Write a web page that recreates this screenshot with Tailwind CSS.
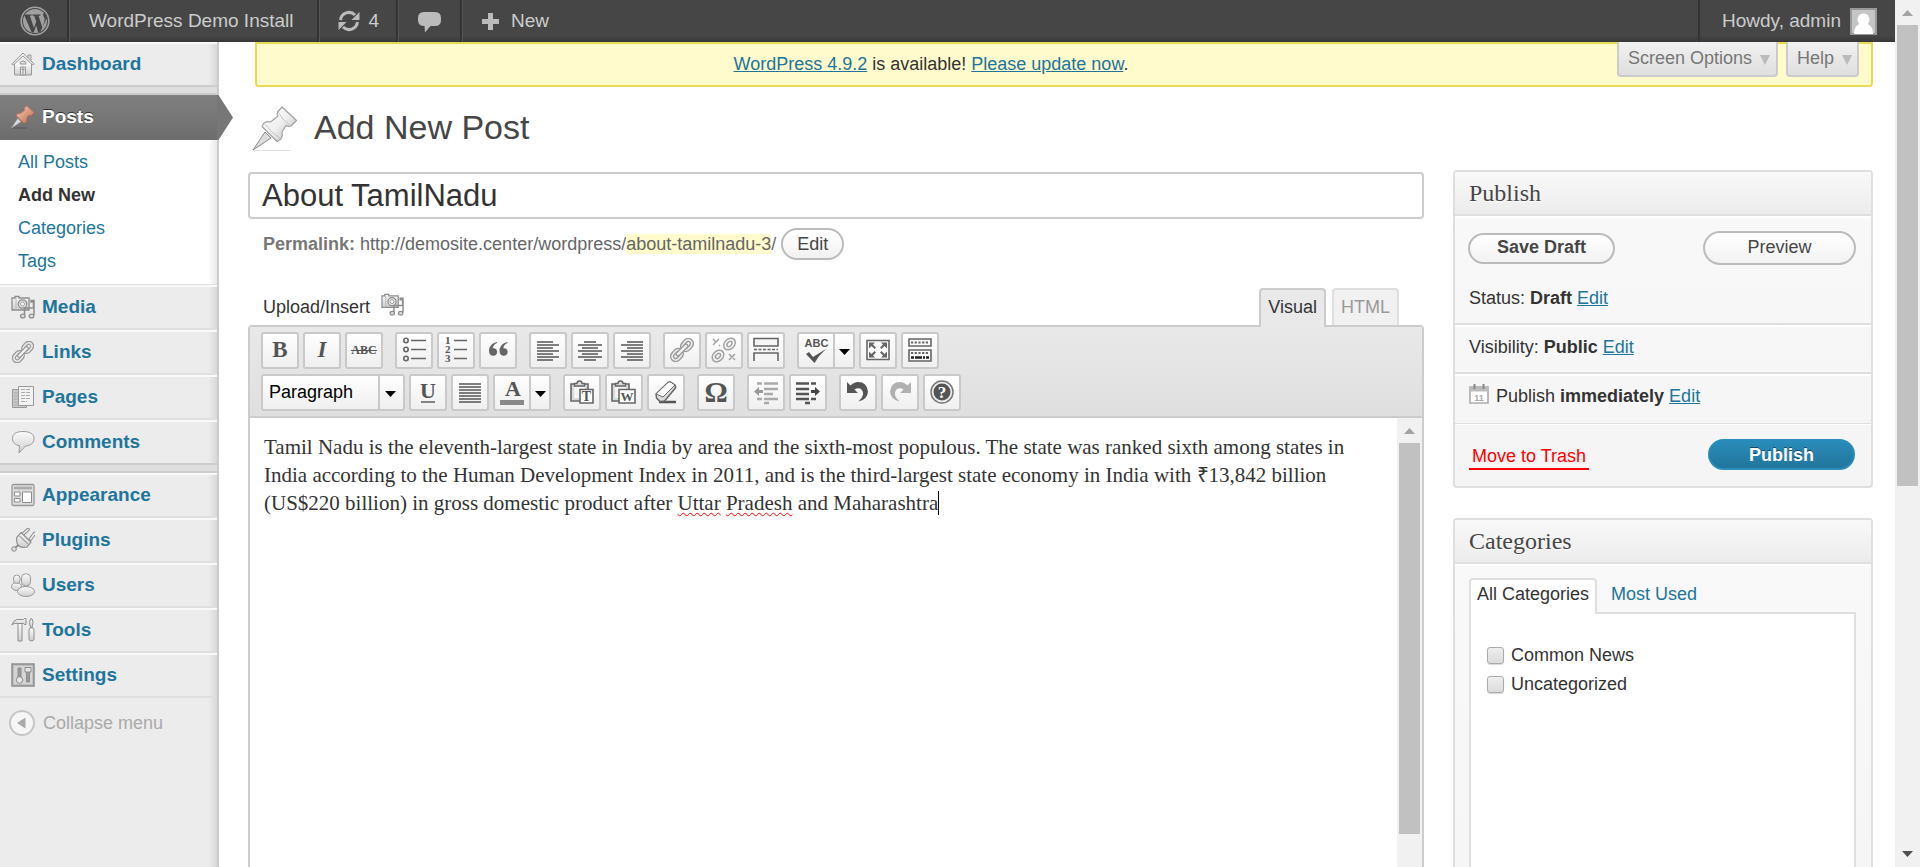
<!DOCTYPE html>
<html lang="en">
<head>
<meta charset="utf-8">
<title>Add New Post</title>
<script src="https://cdn.jsdelivr.net/npm/@tailwindcss/browser@4"></script>
</head>
<body class="flex h-screen overflow-hidden bg-white font-['Liberation_Sans',Arial,sans-serif] text-[18px] leading-6 text-[#333]">
<svg class="absolute size-0" aria-hidden="true">
  <defs>
    <linearGradient id="metal" x1="0" y1="0" x2="0" y2="1"><stop offset="0" stop-color="#fbfbfb"/><stop offset="1" stop-color="#cfcfcf"/></linearGradient>
    <linearGradient id="pinShade" x1="0" y1="0" x2="1" y2="1"><stop offset="0" stop-color="#fff"/><stop offset="0.500" stop-color="#f0f0f0"/><stop offset="1" stop-color="#b4b4b4"/></linearGradient>
    <linearGradient id="pinRed" x1="0" y1="0" x2="1" y2="1"><stop offset="0" stop-color="#f3cbb9"/><stop offset="1" stop-color="#c06a4c"/></linearGradient>
    <symbol id="chain" viewBox="0 0 24 24">
      <g fill="none" stroke-linecap="round">
        <g stroke="#999" stroke-width="4.400"><rect x="-5.500" y="-3.600" width="11" height="7.200" rx="3.600" transform="translate(17 7) rotate(-48)"/><rect x="-5.500" y="-3.600" width="11" height="7.200" rx="3.600" transform="translate(7 17) rotate(-48)"/></g>
        <g stroke="#e9e9e9" stroke-width="1.800"><rect x="-5.500" y="-3.600" width="11" height="7.200" rx="3.600" transform="translate(17 7) rotate(-48)"/><rect x="-5.500" y="-3.600" width="11" height="7.200" rx="3.600" transform="translate(7 17) rotate(-48)"/></g>
        <path d="M8 16 16 8" stroke="#999" stroke-width="5"/><path d="M8 16 16 8" stroke="#f3f3f3" stroke-width="2.400"/>
      </g>
    </symbol>
    <symbol id="media" viewBox="0 0 24 24">
      <path d="M1 3h3V1.500h4V3h10v12H1z" fill="url(#metal)" stroke="#8d8d8d" stroke-width="1.300"/>
      <path d="M5 3v12" stroke="#b5b5b5"/><circle cx="11.500" cy="9" r="4.200" fill="#e8e8e8" stroke="#8d8d8d" stroke-width="1.300"/><circle cx="11.500" cy="9" r="2" fill="#fff" stroke="#999"/>
      <path d="M13.500 20.500V13H22.500V7H20V5.500h3V20" fill="none" stroke="#8d8d8d" stroke-width="1.500"/>
      <ellipse cx="11.800" cy="21" rx="2.300" ry="1.900" fill="#ddd" stroke="#8d8d8d" stroke-width="1.300"/><ellipse cx="20.500" cy="21" rx="2.300" ry="1.900" fill="#ddd" stroke="#8d8d8d" stroke-width="1.300"/>
    </symbol>
    <symbol id="clip" viewBox="0 0 24 24">
      <path d="M1 4h17v17H1z" fill="#d9d9d9" stroke="#666" stroke-width="1.600"/><path d="M4 7h11v11H4z" fill="#f4f4f4"/>
      <path d="M4.500 6V3.500H7A2.500 2.500 0 0 1 12 3.500h2.500V6z" fill="#ddd" stroke="#666" stroke-width="1.400"/>
    </symbol>
    <symbol id="pin" viewBox="0 0 46 46">
      <path d="M1 44.500h38" stroke="#e3e3e3"/><path d="M1 44 13 26l6 6z" fill="#ddd" stroke="#888"/>
      <path d="M30 1 44.500 14.500 39 20q-3 1-5-.5L30 26q1 4-1 7l-4 2.500L10 20.500 12 17q3-2 6.500-1L26 10q-1.500-2-.5-4z" fill="url(#pinShade)" stroke="#a2a2a2" stroke-width="1.200" stroke-linejoin="round"/>
      <path d="M26 6q5 9 13 14M13 18q6 9 15 14" fill="none" stroke="#c6c6c6"/>
    </symbol>
  </defs>
</svg>

<div class="flex min-w-0 flex-1 flex-col">
  <header class="flex h-[42px] shrink-0 items-stretch bg-linear-to-b from-[#464646] from-85% to-[#383838] text-[19px] text-[#ccc]">
    <a href="#" aria-label="About WordPress" class="flex w-[69px] items-center border-r-2 border-[#333] pl-5">
      <svg class="size-[30px]" viewBox="0 0 30 30"><circle cx="15" cy="15" r="13.800" fill="none" stroke="#a0a0a0" stroke-width="1.600"/><circle cx="15" cy="15" r="12" fill="#a0a0a0"/><path d="M4 8.500h7.500v1.300H9.800L14 22l2.200-6.500-2-5.700h-1.700V8.500h8v1.300h-2l4 12 2-7c.7-3-1.200-4-1.300-5.800C23 7.500 24 6.500 25 6.500L27 12l-7 14.500-2-.5-1.800-6.500-2.500 7h-2L4.500 9.800z" fill="#464646"/></svg>
    </a>
    <a href="#" class="flex items-center border-r-2 border-l border-r-[#333] border-l-[#555] pr-[23px] pl-[19px]">WordPress Demo Install</a>
    <a href="#" class="flex items-center gap-2 border-r-2 border-l border-r-[#333] border-l-[#555] px-[17px]">
      <svg class="size-[24px]" viewBox="0 0 24 24" fill="none" stroke="#bbb" stroke-width="3"><path d="M3.500 11A8.500 8.500 0 0 1 18 6M20.500 13A8.500 8.500 0 0 1 6 18"/><path d="M22.500 3v8h-8zM1.500 21v-8h8z" fill="#bbb" stroke="none"/></svg>4</a>
    <a href="#" aria-label="Comments" class="flex items-center border-r-2 border-l border-r-[#333] border-l-[#555] px-[19px]">
      <svg class="size-[23px]" viewBox="0 0 23 23"><path d="M6 2h11q6 0 6 6v2q0 6-6 6h-4.500L7 22.500 6.500 16Q0 16 0 10V8q0-6 6-6z" fill="#bbb"/></svg></a>
    <a href="#" class="flex items-center gap-3 border-l border-[#555] px-[19px]">
      <svg class="size-[17px]" viewBox="0 0 17 17"><path d="M6 0h5v6h6v5h-6v6H6v-6H0V6h6z" fill="#bbb"/></svg>New</a>
    <a href="#" class="ml-auto flex items-center gap-[9px] border-l-2 border-[#333] pr-[18px] pl-[22px]">Howdy, admin
      <svg class="size-[27px]" viewBox="0 0 27 27"><rect x="1" y="1" width="25" height="25" fill="#c5c5c5" stroke="#999" stroke-width="2"/><circle cx="13.500" cy="11.500" r="6" fill="#fff"/><path d="M4 26q0-9 7-10.500h5Q23 17 23 26z" fill="#fff"/></svg></a>
  </header>

  <div class="flex min-h-0 flex-1 items-stretch">
    <aside class="w-[219px] shrink-0 border-r-2 border-[#ccc] bg-linear-to-l from-[#d8d8d8] to-[#ececec] to-4% text-[19px] font-bold text-[#21759b]">
      <nav aria-label="Admin menu">
        <a href="#" class="flex h-[45px] items-center gap-[7px] border-t-2 border-b-2 border-t-[#f9f9f9] border-b-[#ccc] pb-0.5 pl-[11px]">
          <svg class="size-6" viewBox="0 0 24 24"><path d="M3.500 11v12h17V11" fill="url(#metal)" stroke="#999"/><path d="M17 3h3v6h-3z" fill="#ddd" stroke="#999"/><path d="M12 1 0.800 12l1.500 1L12 4l9.700 9 1.500-1z" fill="#eee" stroke="#999"/><path d="M9.500 15h5v8h-5zM10.500 17.500h3M12 15v8M9 12a3 3 0 0 1 6 0z" fill="#e3e3e3" stroke="#999"/></svg>
          Dashboard</a>
        <div class="h-2 border-b-2 border-[#ccc] bg-[#dedede]"></div>
        <a href="#" class="relative flex h-[45px] items-center gap-[7px] bg-linear-to-b from-[#808080] to-[#6d6d6d] pb-0.5 pl-[11px] text-white text-shadow-[0_-1px_0_#333]">
          <svg class="absolute top-0 left-[217px] h-[45px] w-4" viewBox="0 0 16 45"><path d="M0 0h1.500L16 22.500 1.500 45H0z" fill="#777"/></svg>
          <svg class="size-6" viewBox="0 0 46 46"><path d="M2 44h28" stroke="#5e5e5e" stroke-width="3"/><path d="M1 44 13 26l6 6z" fill="#ddd" stroke="#aaa"/><path d="M30 1 44.500 14.500 39 20q-3 1-5-.5L30 26q1 4-1 7l-4 2.500L10 20.500 12 17q3-2 6.500-1L26 10q-1.500-2-.5-4z" fill="url(#pinRed)" stroke="#b2674d" stroke-width="1.500"/></svg>
          Posts</a>
        <ul class="border-b border-[#dfdfdf] bg-linear-to-l from-[#e9e9e9] to-white to-4% pt-[6px] pb-[6px] pl-[18px] text-[18px] leading-[33px] font-normal">
          <li><a href="#">All Posts</a></li>
          <li><a href="#" class="font-bold text-[#333]">Add New</a></li>
          <li><a href="#">Categories</a></li>
          <li><a href="#">Tags</a></li>
        </ul>
        <a href="#" class="flex h-[45px] items-center gap-[7px] border-t-2 border-b-2 border-t-[#f9f9f9] border-b-[#dfdfdf] pb-0.5 pl-[11px]">
          <svg class="size-6"><use href="#media"/></svg>Media</a>
        <a href="#" class="flex h-[45px] items-center gap-[7px] border-t-2 border-b-2 border-t-[#f9f9f9] border-b-[#dfdfdf] pb-0.5 pl-[11px]">
          <svg class="size-6" viewBox="-1 -1 26 26"><use href="#chain" width="24" height="24"/></svg>Links</a>
        <a href="#" class="flex h-[45px] items-center gap-[7px] border-t-2 border-b-2 border-t-[#f9f9f9] border-b-[#dfdfdf] pb-0.5 pl-[11px]">
          <svg class="size-6" viewBox="0 0 24 24"><path d="M1.500 4.500h14v18h-14z" fill="#c9c9c9" stroke="#999"/><path d="M3 8h4m-4 3h4m-4 3h4m-4 3h4m-4 3h9" stroke="#aaa"/><path d="M7.500 1.500h15v19h-15z" fill="#f2f2f2" stroke="#999"/><path d="M10 4.500h10M10 7.500h10M10 10.500h10M10 13.500h10M10 16.500h6" stroke="#aaa" stroke-dasharray="4 1"/></svg>Pages</a>
        <a href="#" class="flex h-[45px] items-center gap-[7px] border-t-2 border-b-2 border-t-[#f9f9f9] border-b-[#ccc] pb-0.5 pl-[11px]">
          <svg class="size-6" viewBox="0 0 24 24"><path d="M12 1.500c7 0 11 2.500 11 7s-3 7-8.500 7.500L8 23l.5-7.300C4 15 1.500 12.500 1.500 8.500c0-4.500 3.500-7 10.500-7z" fill="url(#metal)" stroke="#999"/></svg>Comments</a>
        <div class="h-2 border-b-2 border-[#ccc] bg-[#dedede]"></div>
        <a href="#" class="flex h-[45px] items-center gap-[7px] border-t-2 border-b-2 border-t-[#f9f9f9] border-b-[#dfdfdf] pb-0.5 pl-[11px]">
          <svg class="size-6" viewBox="0 0 24 24"><rect x="1" y="1.500" width="22" height="21" rx="1.500" fill="#ddd" stroke="#999" stroke-width="1.300"/><path d="M3 5h18" stroke="#aaa" stroke-width="2.500"/><path d="M3.500 9h5.500v4H3.500zM3.500 15.500h5.500V19H3.500zM11.500 9h9v10.500h-9z" fill="#fff" stroke="#8d8d8d"/></svg>Appearance</a>
        <a href="#" class="flex h-[45px] items-center gap-[7px] border-t-2 border-b-2 border-t-[#f9f9f9] border-b-[#dfdfdf] pb-0.5 pl-[11px]">
          <svg class="size-6" viewBox="0 0 24 24"><path d="m12 6 5-4.500M19.500 11l4-5.500" stroke="#8d8d8d" stroke-width="3.600" stroke-linecap="round"/><path d="m12 6 5-4.500M19.500 11l4-5.500" stroke="#eee" stroke-width="1.600" stroke-linecap="round"/><path d="M10 4.500 20 14l-4 5c-4 1-7 0-8.500-1.500S5 12 6 9z" fill="url(#metal)" stroke="#8d8d8d" stroke-width="1.200"/><path d="m8.500 8 8.500 8" stroke="#aaa" stroke-width="1.500"/><circle cx="3" cy="21" r="2.300" fill="#ddd" stroke="#8d8d8d"/><path d="m4.500 19.500 3-2.500" stroke="#8d8d8d" stroke-width="2"/></svg>Plugins</a>
        <a href="#" class="flex h-[45px] items-center gap-[7px] border-t-2 border-b-2 border-t-[#f9f9f9] border-b-[#dfdfdf] pb-0.5 pl-[11px]">
          <svg class="size-6" viewBox="0 0 24 24" stroke="#999" fill="url(#metal)"><ellipse cx="5.500" cy="13.500" rx="5" ry="4"/><rect x="2.500" y="2" width="6.500" height="8.500" rx="3.200"/><ellipse cx="15" cy="18.500" rx="8.500" ry="5"/><rect x="10.500" y="0.800" width="9" height="12" rx="4"/></svg>Users</a>
        <a href="#" class="flex h-[45px] items-center gap-[7px] border-t-2 border-b-2 border-t-[#f9f9f9] border-b-[#dfdfdf] pb-0.5 pl-[11px]">
          <svg class="size-6" viewBox="0 0 24 24" stroke="#8d8d8d" fill="url(#metal)"><path d="M.8 7Q2 2.500 6 1.500h6.500l1-1h1.500v6h-1.500l-1-1h-6Q3 4.500.8 7z"/><path d="M7 5.500h4v17.500H7z"/><path d="M19.500.8h1.500l1 3.500-1 5.500h-1.500l-1-5.500z"/><rect x="18" y="9.800" width="5" height="13" rx="2"/></svg>Tools</a>
        <a href="#" class="flex h-[45px] items-center gap-[7px] border-t-2 border-b-2 border-t-[#f9f9f9] border-b-[#dfdfdf] pb-0.5 pl-[11px]">
          <svg class="size-6" viewBox="0 0 24 24" stroke="#8d8d8d"><path d="M1 1h22v22H1z" fill="#bfbfbf" stroke-width="1.500"/><path d="M3 3h18v18H3z" fill="#d5d5d5" stroke="none"/><path d="M7 5h3v11H7zM15.500 8h3v11h-3z" fill="#999"/><circle cx="8.500" cy="17" r="3.300" fill="#e5e5e5"/><path d="M14 4.500h6v4.500h-6z" fill="#e5e5e5"/></svg>Settings</a>
      </nav>
      <button type="button" class="flex h-[50px] items-center gap-2 pl-[9px] text-[18px] font-normal text-[#aaa]">
        <svg class="size-[26px]" viewBox="0 0 26 26"><circle cx="13" cy="13" r="12" fill="#f6f6f6" stroke="#c6c6c6" stroke-width="2"/><path d="M16.500 7.500v11L8 13z" fill="#aaa"/></svg>
        Collapse menu</button>
    </aside>

    <main class="min-w-0 flex-1 overflow-hidden pr-[22px] pl-[29px]">
      <div class="ml-[7px] flex h-[45px] items-start rounded-b border-2 border-[#e6db55] bg-[#fffbcc]">
        <p class="flex-1 pt-2 text-center"><a href="#" class="text-[#21759b] underline">WordPress 4.9.2</a> is available! <a href="#" class="text-[#21759b] underline">Please update now</a>.</p>
        <div class="-mt-0.5 mr-3 ml-3 flex gap-2 text-[#777] text-shadow-[0_1px_0_#fff]">
          <button type="button" class="flex h-[35px] items-center gap-2 rounded-b border-2 border-t-0 border-[#ccc] bg-linear-to-b from-[#f1f1f1] to-[#dfdfdf] pr-[6px] pb-0.5 pl-[9px]">Screen Options <svg class="mt-1 size-[10px]" viewBox="0 0 10 10"><path d="M0 0h10L5 10z" fill="#bbb"/></svg></button>
          <button type="button" class="flex h-[35px] items-center gap-2 rounded-b border-2 border-t-0 border-[#ccc] bg-linear-to-b from-[#f1f1f1] to-[#dfdfdf] pr-[5px] pb-0.5 pl-[9px]">Help <svg class="mt-1 size-[10px]" viewBox="0 0 10 10"><path d="M0 0h10L5 10z" fill="#bbb"/></svg></button>
        </div>
      </div>

      <div class="flex h-[83px] items-center gap-4 pl-1">
        <svg class="size-[46px]"><use href="#pin"/></svg>
        <h1 class="pb-1 text-[34px] leading-10 text-[#464646]">Add New Post</h1>
      </div>

      <div class="flex items-start gap-[29px]">
        <section class="min-w-0 flex-1 pt-0.5">
          <input type="text" aria-label="Title" value="About TamilNadu" class="block h-[47px] w-full rounded border-2 border-[#ccc] bg-white px-3 text-[31px] text-[#333]">
          <div class="mt-[9px] flex h-8 items-center pl-[15px] text-[#666]">
            <strong class="mr-[5px] text-[#777]">Permalink:</strong>http://demosite.center/wordpress/<span class="bg-[#fffbcc] leading-5">about-tamilnadu-3</span>/
            <button type="button" class="ml-[5px] h-8 rounded-full border-2 border-[#bbb] bg-linear-to-b from-white to-[#f2f2f2] px-[14px] text-[#464646]">Edit</button>
          </div>
          <div class="mt-7 flex h-[37px] items-start pr-[25px] pl-[15px]">
            <span class="pt-[7px]">Upload/Insert</span>
            <button type="button" aria-label="Add media" class="mt-[5px] ml-[11px]"><svg class="size-[23px]"><use href="#media"/></svg></button>
            <div class="ml-auto flex gap-[6px]">
              <button type="button" class="relative z-10 h-[39px] rounded-t border-2 border-b-0 border-[#ccc] bg-[#e9e9e9] px-[7px] pb-1">Visual</button>
              <button type="button" class="h-[37px] rounded-t border-2 border-b-0 border-[#dfdfdf] bg-[#f1f1f1] px-[7px] pb-0.5 text-[#999]">HTML</button>
            </div>
          </div>

          <div class="rounded-t border-2 border-[#ccc]">
            <div class="flex flex-col gap-[5px] border-b-2 border-[#ccc] bg-linear-to-b from-[#e9e9e9] to-[#dfdfdf] px-[11px] pt-[5px] pb-[5px] font-['Liberation_Serif',serif]">
              <div class="flex gap-3">
                <div class="flex gap-1">
                  <button type="button" aria-label="Bold" class="h-[37px] w-[38px] rounded-[3px] border-2 border-[#c9c9c9] bg-linear-to-b from-white to-[#efefef]"><svg class="size-full" viewBox="2 2 34 33"><text x="19" y="25" text-anchor="middle" font-size="23" font-weight="700" fill="#555">B</text></svg></button>
                  <button type="button" aria-label="Italic" class="h-[37px] w-[38px] rounded-[3px] border-2 border-[#c9c9c9] bg-linear-to-b from-white to-[#efefef]"><svg class="size-full" viewBox="2 2 34 33"><text x="19" y="25" text-anchor="middle" font-size="23" font-weight="700" font-style="italic" fill="#555">I</text></svg></button>
                  <button type="button" aria-label="Strikethrough" class="h-[37px] w-[38px] rounded-[3px] border-2 border-[#c9c9c9] bg-linear-to-b from-white to-[#efefef]"><svg class="size-full" viewBox="2 2 34 33"><text x="19" y="22" text-anchor="middle" font-size="12" font-weight="700" fill="#555">ABC</text><path d="M6 18.500h26" stroke="#555"/></svg></button>
                </div>
                <div class="flex gap-1">
                  <button type="button" aria-label="Unordered list" class="h-[37px] w-[38px] rounded-[3px] border-2 border-[#c9c9c9] bg-linear-to-b from-white to-[#efefef]"><svg class="size-full" viewBox="2 2 34 33" stroke="#666" stroke-width="1.600" fill="none"><circle cx="11" cy="8.500" r="2.200"/><circle cx="11" cy="17.500" r="2.200"/><circle cx="11" cy="26.500" r="2.200"/><path d="M16 8.500h15M16 17.500h15M16 26.500h15" stroke-width="1.500"/></svg></button>
                  <button type="button" aria-label="Ordered list" class="h-[37px] w-[38px] rounded-[3px] border-2 border-[#c9c9c9] bg-linear-to-b from-white to-[#efefef]"><svg class="size-full" viewBox="2 2 34 33"><g font-size="11" font-weight="700" fill="#555"><text x="8" y="12">1</text><text x="8" y="21">2</text><text x="8" y="30">3</text></g><path d="M17 8.500h13M17 17.500h13M17 26.500h13" stroke="#666" stroke-width="1.500"/></svg></button>
                  <button type="button" aria-label="Blockquote" class="h-[37px] w-[38px] rounded-[3px] border-2 border-[#c9c9c9] bg-linear-to-b from-white to-[#efefef]"><svg class="size-full" viewBox="2 2 34 33" fill="#666"><path id="q" d="M18 10c-5 1-8 4.500-8 9 0 3 1.800 4.800 4.200 4.800 2.300 0 4-1.600 4-3.900 0-2.200-1.500-3.700-3.600-3.700h-.8c.3-2.500 2-4.300 4.200-5.200z"/><use href="#q" x="10.500"/></svg></button>
                </div>
                <div class="flex gap-1">
                  <button type="button" aria-label="Align left" class="h-[37px] w-[38px] rounded-[3px] border-2 border-[#c9c9c9] bg-linear-to-b from-white to-[#efefef]"><svg class="size-full" viewBox="2 2 34 33"><path d="M8 10h16M8 13h22M8 16h16M8 19h22M8 22h16M8 25h22M8 28h16" stroke="#555" stroke-width="1.600"/></svg></button>
                  <button type="button" aria-label="Align center" class="h-[37px] w-[38px] rounded-[3px] border-2 border-[#c9c9c9] bg-linear-to-b from-white to-[#efefef]"><svg class="size-full" viewBox="2 2 34 33"><path d="M13 10h12M7 13h24M11 16h16M7 19h24M11 22h16M7 25h24M13 28h12" stroke="#555" stroke-width="1.600"/></svg></button>
                  <button type="button" aria-label="Align right" class="h-[37px] w-[38px] rounded-[3px] border-2 border-[#c9c9c9] bg-linear-to-b from-white to-[#efefef]"><svg class="size-full" viewBox="2 2 34 33"><path d="M14 10h16M8 13h22M14 16h16M8 19h22M14 22h16M8 25h22M14 28h16" stroke="#555" stroke-width="1.600"/></svg></button>
                </div>
                <div class="flex gap-1">
                  <button type="button" aria-label="Insert link" class="h-[37px] w-[38px] rounded-[3px] border-2 border-[#c9c9c9] bg-linear-to-b from-white to-[#efefef]"><svg class="size-full" viewBox="2 2 34 33"><use href="#chain" x="7" y="6" width="24" height="24"/></svg></button>
                  <button type="button" aria-label="Unlink" class="h-[37px] w-[38px] rounded-[3px] border-2 border-[#c9c9c9] bg-linear-to-b from-white to-[#efefef]"><svg class="size-full" viewBox="2 2 34 33" fill="none" stroke="#a2a2a2" stroke-width="1.500"><g id="lnk"><ellipse cx="24.500" cy="12" rx="6.500" ry="5" transform="rotate(-45 24.500 12)"/><ellipse cx="24.500" cy="12" rx="3" ry="2" transform="rotate(-45 24.500 12)"/></g><use href="#lnk" x="-11.500" y="12"/><path d="m8 7 3 3m3-3-3 3m-3 3 3-3m3 3 1 1M24 22l3 3m3-3-3 3m-3 3 3-3m1 1 2 2"/></svg></button>
                  <button type="button" aria-label="Insert More tag" class="h-[37px] w-[38px] rounded-[3px] border-2 border-[#c9c9c9] bg-linear-to-b from-white to-[#efefef]"><svg class="size-full" viewBox="2 2 34 33" fill="#f5f5f5" stroke="#666" stroke-width="1.600"><path d="M7 6.500h24v7.500H7zM7 29V21h24v8"/><path d="M7 17.500h24" stroke-dasharray="3 1.500"/></svg></button>
                </div>
                <div class="flex gap-1">
                  <div class="flex">
                    <button type="button" aria-label="Check spelling" class="h-[37px] w-[38px] rounded-l-[3px] border-2 border-[#c9c9c9] bg-linear-to-b from-white to-[#efefef]"><svg class="size-full" viewBox="2 2 34 33"><text x="19.500" y="15" text-anchor="middle" font-family="Liberation Sans" font-size="11" font-weight="700" fill="#555">ABC</text><path d="m9 22 3-2 4 5L29 17q-7 6-11.500 14z" fill="#555"/></svg></button>
                    <button type="button" aria-label="Spelling languages" class="h-[37px] w-5 rounded-r-[3px] border-2 border-l-0 border-[#c9c9c9] bg-linear-to-b from-white to-[#efefef]"><svg class="size-full" viewBox="0 0 18 33"><path d="M4 15h11l-5.500 6z"/></svg></button>
                  </div>
                  <button type="button" aria-label="Fullscreen" class="h-[37px] w-[38px] rounded-[3px] border-2 border-[#c9c9c9] bg-linear-to-b from-white to-[#efefef]"><svg class="size-full" viewBox="2 2 34 33"><path d="M8 8.500h22v19H8z" fill="#fafafa" stroke="#666" stroke-width="1.600"/><path d="M10 10.500h6l-2 2 3 3-1.500 1.500-3-3-2.500 2.500zM28 10.500h-6l2 2-3 3 1.500 1.500 3-3 2.500 2.500zM10 25.500h6l-2-2 3-3-1.500-1.500-3 3-2.500-2.500zM28 25.500h-6l2-2-3-3 1.500-1.500 3 3 2.500-2.500z" fill="#666"/></svg></button>
                  <button type="button" aria-label="Kitchen sink" class="h-[37px] w-[38px] rounded-[3px] border-2 border-[#c9c9c9] bg-linear-to-b from-white to-[#efefef]"><svg class="size-full" viewBox="2 2 34 33" fill="#fafafa" stroke="#666" stroke-width="1.600"><path d="M8 7h22v7H8zM8 18h22v11H8z"/><path d="M10 10.500h18M10 21h18" stroke-width="2.200" stroke-dasharray="2.200 1.500"/><path d="M10 25.500h18" stroke="#222" stroke-width="2.500" stroke-dasharray="3 1 7 1 2 1"/></svg></button>
                </div>
              </div>

              <div class="flex gap-3">
                <div class="flex gap-1">
                  <div class="relative w-36">
                    <select aria-label="Format" class="h-[37px] w-full appearance-none rounded-[3px] border-2 border-[#c9c9c9] bg-linear-to-b from-white to-[#efefef] pb-0.5 pl-[6px] font-['Liberation_Sans',sans-serif] text-[18px] text-black"><option>Paragraph</option></select>
                    <svg class="pointer-events-none absolute top-0 right-0 h-[37px] w-[27px]" viewBox="0 0 27 37"><path d="M1 1v35" stroke="#c9c9c9" stroke-width="2"/><path d="M7 17h11l-5.500 6z"/></svg>
                  </div>
                  <button type="button" aria-label="Underline" class="h-[37px] w-[38px] rounded-[3px] border-2 border-[#c9c9c9] bg-linear-to-b from-white to-[#efefef]"><svg class="size-full" viewBox="2 2 34 33"><text x="19" y="24" text-anchor="middle" font-size="22" font-weight="700" fill="#555">U</text><path d="M12 28h14" stroke="#666" stroke-width="1.600"/></svg></button>
                  <button type="button" aria-label="Justify" class="h-[37px] w-[38px] rounded-[3px] border-2 border-[#c9c9c9] bg-linear-to-b from-white to-[#efefef]"><svg class="size-full" viewBox="2 2 34 33"><path d="M8 10h22M8 13h22M8 16h22M8 19h22M8 22h22M8 25h22M8 28h22" stroke="#555" stroke-width="1.600"/></svg></button>
                  <div class="flex">
                    <button type="button" aria-label="Text color" class="h-[37px] w-[38px] rounded-l-[3px] border-2 border-[#c9c9c9] bg-linear-to-b from-white to-[#efefef]"><svg class="size-full" viewBox="2 2 34 33"><text x="20" y="22" text-anchor="middle" font-size="22" font-weight="700" fill="#555">A</text><path d="M7 26h24v5H7z" fill="#888"/></svg></button>
                    <button type="button" aria-label="More colors" class="h-[37px] w-5 rounded-r-[3px] border-2 border-l-0 border-[#c9c9c9] bg-linear-to-b from-white to-[#efefef]"><svg class="size-full" viewBox="0 0 18 33"><path d="M4 15h11l-5.500 6z"/></svg></button>
                  </div>
                </div>
                <div class="flex gap-1">
                  <button type="button" aria-label="Paste as text" class="h-[37px] w-[38px] rounded-[3px] border-2 border-[#c9c9c9] bg-linear-to-b from-white to-[#efefef]"><svg class="size-full" viewBox="2 2 34 33"><use href="#clip" x="7" y="6" width="24" height="24"/><path d="M17 15.500h13v13.500H17z" fill="#fff" stroke="#666" stroke-width="1.600"/><text x="23.500" y="27" text-anchor="middle" font-size="14" font-weight="700" fill="#555">T</text></svg></button>
                  <button type="button" aria-label="Paste from Word" class="h-[37px] w-[38px] rounded-[3px] border-2 border-[#c9c9c9] bg-linear-to-b from-white to-[#efefef]"><svg class="size-full" viewBox="2 2 34 33"><use href="#clip" x="6" y="6" width="24" height="24"/><path d="M14 15.500h16v13.500H14z" fill="#fff" stroke="#666" stroke-width="1.600"/><text x="22" y="27" text-anchor="middle" font-size="13" font-weight="700" fill="#555">W</text></svg></button>
                  <button type="button" aria-label="Remove formatting" class="h-[37px] w-[38px] rounded-[3px] border-2 border-[#c9c9c9] bg-linear-to-b from-white to-[#efefef]"><svg class="size-full" viewBox="2 2 34 33" stroke="#666" stroke-width="1.500" stroke-linejoin="round"><path d="M12 28h17" stroke="#555" stroke-width="2.500"/><path d="M9 20 21 8.500q1.500-1 3-.2l4 2.700q1.200 1.500 0 3.500L17.500 27l-4.500.5L9.500 24z" fill="#ddd"/><path d="M9 20 21 8.500q1.500-1 3-.2l4 2.700L16 23z" fill="#fff" stroke-width="1"/></svg></button>
                </div>
                <button type="button" aria-label="Insert custom character" class="h-[37px] w-[38px] rounded-[3px] border-2 border-[#c9c9c9] bg-linear-to-b from-white to-[#efefef]"><svg class="size-full" viewBox="2 2 34 33"><text x="19" y="28" text-anchor="middle" font-size="29" font-weight="700" fill="#555">Ω</text></svg></button>
                <div class="flex gap-1">
                  <button type="button" aria-label="Outdent" class="h-[37px] w-[38px] rounded-[3px] border-2 border-[#c9c9c9] bg-linear-to-b from-white to-[#efefef]"><svg class="size-full" viewBox="2 2 34 33"><path d="M10 9.500h5M17 9.500h14M17 15h14M17 20h9M10 25h5M17 25h14M17 29h5" stroke="#aaa" stroke-width="2.300"/><path d="M7 17.500 12 13v3h4v3h-4v3z" fill="#999"/></svg></button>
                  <button type="button" aria-label="Indent" class="h-[37px] w-[38px] rounded-[3px] border-2 border-[#c9c9c9] bg-linear-to-b from-white to-[#efefef]"><svg class="size-full" viewBox="2 2 34 33"><path d="M7 9.500h13M22 9.500h5M7 15h13M7 20h13M7 25h13M22 25h5M16 29h5" stroke="#555" stroke-width="2.500"/><path d="M31 17.500 26 13v3h-4v3h4v3z" fill="#444"/></svg></button>
                </div>
                <div class="flex gap-1">
                  <button type="button" aria-label="Undo" class="h-[37px] w-[38px] rounded-[3px] border-2 border-[#c9c9c9] bg-linear-to-b from-white to-[#efefef]"><svg class="size-full" viewBox="2 2 34 33"><path d="M8 8v11h11l-3.500-3.500q4-2.500 7 0 4.500 5-3 12 9-2 9.500-10Q28 8 19 8q-4 0-7.500 3.500z" fill="#555"/></svg></button>
                  <button type="button" aria-label="Redo" class="h-[37px] w-[38px] rounded-[3px] border-2 border-[#c9c9c9] bg-linear-to-b from-white to-[#efefef]"><svg class="size-full" viewBox="2 2 34 33"><path d="M30 8v11H19l3.500-3.500q-4-2.500-7 0-4.500 5 3 12-9-2-9.500-10Q10 8 19 8q4 0 7.500 3.500z" fill="#b0b0b0"/></svg></button>
                  <button type="button" aria-label="Help" class="h-[37px] w-[38px] rounded-[3px] border-2 border-[#c9c9c9] bg-linear-to-b from-white to-[#efefef]"><svg class="size-full" viewBox="2 2 34 33"><circle cx="19" cy="18" r="11" fill="#eee" stroke="#777" stroke-width="1.500"/><circle cx="19" cy="18" r="8.500" fill="#555"/><text x="19" y="24" text-anchor="middle" font-size="17" font-weight="700" fill="#fff">?</text></svg></button>
                </div>
              </div>
            </div>
            <div class="flex h-[460px] bg-white">
              <div role="textbox" aria-label="Post content" class="min-w-0 flex-1 pt-[15px] pr-4 pl-[14px] font-[Georgia,'Liberation_Serif',serif] text-[21px] leading-7 text-[#333]">Tamil Nadu is the eleventh-largest state in India by area and the sixth-most populous. The state was ranked sixth among states in<br>India according to the Human Development Index in 2011, and is the third-largest state economy in India with ₹13,842 billion<br>(US$220 billion) in gross domestic product after <span class="underline decoration-[#f00] decoration-wavy decoration-1 underline-offset-2">Uttar</span> <span class="underline decoration-[#f00] decoration-wavy decoration-1 underline-offset-2">Pradesh</span> and Maharashtra<span class="border-r border-black"></span></div>
              <div class="flex w-[25px] shrink-0 flex-col items-center bg-[#f1f1f1]" aria-hidden="true">
                <svg class="h-[25px] w-[11px]" viewBox="0 0 11 25"><path d="M0 16h11l-5.500-6z" fill="#a3a3a3"/></svg>
                <div class="h-[391px] w-[21px] bg-[#c1c1c1]"></div>
              </div>
            </div>
          </div>
        </section>

        <div class="flex w-[420px] shrink-0 flex-col gap-[30px]">
          <section class="rounded border-2 border-[#dfdfdf] bg-linear-to-b from-[#f9f9f9] to-[#f5f5f5]">
            <h2 class="flex h-[44px] items-center border-b-2 border-[#dfdfdf] bg-linear-to-b from-[#f9f9f9] to-[#ececec] pl-[14px] font-[Georgia,'Liberation_Serif',serif] text-[24px] text-[#464646] text-shadow-[0_1px_0_#fff]">Publish</h2>
            <div class="flex h-[65px] items-center justify-between border-t-2 border-white pr-[15px] pb-[3px] pl-[13px]">
              <button type="button" class="h-[31px] w-[147px] rounded-full border-2 border-[#bbb] bg-linear-to-b from-white to-[#f2f2f2] pb-0.5 leading-6 font-bold text-[#464646]">Save Draft</button>
              <button type="button" class="h-[34px] w-[153px] rounded-full border-2 border-[#bbb] bg-linear-to-b from-white to-[#f2f2f2] pb-0.5 text-[#464646]">Preview</button>
            </div>
            <p class="h-[44px] border-b-2 border-[#dfdfdf] pt-[5px] pl-[14px]">Status: <strong>Draft</strong> <a href="#" class="text-[#21759b] underline">Edit</a></p>
            <p class="h-[49px] border-t-2 border-b-2 border-t-white border-b-[#dfdfdf] pt-[8px] pl-[14px]">Visibility: <strong>Public</strong> <a href="#" class="text-[#21759b] underline">Edit</a></p>
            <div class="flex h-[50px] items-start border-t-2 border-b border-t-white border-b-[#dfdfdf] pt-[8px] pl-[14px]">
              <svg class="mr-[7px] size-[20px]" viewBox="0 0 20 20"><path d="M1 3h18v16H1z" fill="#fff" stroke="#aaa" stroke-width="1.600"/><path d="M1 2.500h18v5H1z" fill="#bbb"/><path d="M5.500 0v5M14.500 0v5" stroke="#888" stroke-width="2"/><text x="10" y="16.500" text-anchor="middle" font-size="9" font-weight="700" fill="#aaa">11</text></svg>
              <p>Publish <strong>immediately</strong> <a href="#" class="text-[#21759b] underline">Edit</a></p>
            </div>
            <div class="flex h-[62px] items-center justify-between border-t border-white pr-4 pb-0.5 pl-[14px]">
              <a href="#" class="mt-1 border-b-2 border-[#f00] px-[3px] text-[#f00]">Move to Trash</a>
              <button type="button" class="h-[31px] w-[147px] rounded-full border-2 border-[#298cba] bg-linear-to-b from-[#298cba] to-[#21759b] leading-6 font-bold text-white text-shadow-[0_-1px_0_#144a63]">Publish</button>
            </div>
          </section>

          <section class="rounded border-2 border-[#dfdfdf] bg-linear-to-b from-[#f9f9f9] to-[#f5f5f5]">
            <h2 class="flex h-[44px] items-center border-b-2 border-[#dfdfdf] bg-linear-to-b from-[#f9f9f9] to-[#ececec] pl-[14px] font-[Georgia,'Liberation_Serif',serif] text-[24px] text-[#464646] text-shadow-[0_1px_0_#fff]">Categories</h2>
            <div class="border-t-2 border-white pt-3 pr-[15px] pl-[14px]">
              <div class="flex items-start">
                <a href="#" class="relative -mb-0.5 h-9 rounded-t border-2 border-b-0 border-[#dfdfdf] bg-white px-[6px] pt-[2px]">All Categories</a>
                <a href="#" class="px-[14px] pt-1 text-[#21759b]">Most Used</a>
              </div>
              <div class="flex h-[400px] flex-col gap-[5px] border-2 border-[#dfdfdf] bg-white pt-[29px] pl-4">
                <label class="flex h-6 items-center gap-[7px]"><input type="checkbox" class="size-[17px] appearance-none rounded-[3px] border border-[#aaa] bg-linear-to-b from-[#eee] to-[#dcdcdc] shadow-[0_1px_1px_rgba(0,0,0,0.15)]">Common News</label>
                <label class="flex h-6 items-center gap-[7px]"><input type="checkbox" class="size-[17px] appearance-none rounded-[3px] border border-[#aaa] bg-linear-to-b from-[#eee] to-[#dcdcdc] shadow-[0_1px_1px_rgba(0,0,0,0.15)]">Uncategorized</label>
              </div>
            </div>
          </section>
        </div>
      </div>
    </main>
  </div>
</div>

<div class="flex w-[25px] shrink-0 flex-col items-center bg-[#f1f1f1]" aria-hidden="true">
  <svg class="h-[25px] w-[11px]" viewBox="0 0 11 25"><path d="M0 16h11l-5.500-6z" fill="#a3a3a3"/></svg>
  <div class="h-[461px] w-[21px] bg-[#c1c1c1]"></div>
  <svg class="mt-auto h-[25px] w-[11px]" viewBox="0 0 11 25"><path d="M0 9h11l-5.500 6z" fill="#505050"/></svg>
</div>
</body>
</html>
